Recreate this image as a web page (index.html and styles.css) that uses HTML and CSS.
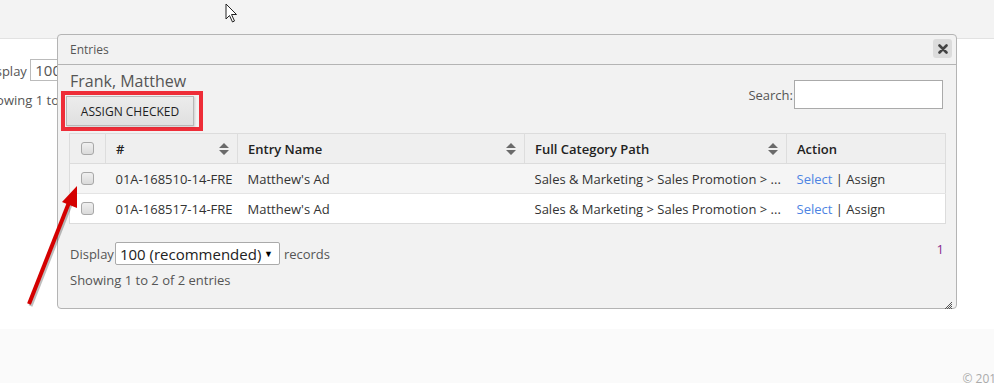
FILE: index.html
```html
<!DOCTYPE html>
<html>

<head>
    <title>Entries</title>
    <link rel="stylesheet" href="styles.css">
</head>

<body>

    <div class="topbar"></div>
    <div class="page">
        <div class="page-length">
            Display <span class="page-select">100</span> records
        </div>
        <div class="page-info">Showing 1 to 2 of 2 entries</div>
    </div>
    <div class="page-footer">&copy; 2014</div>

    <div class="dialog">
        <div class="dialog-title">
            <span>Entries</span>
            <button class="dialog-close" title="close">
                <svg width="10" height="10" viewBox="0 0 10 10">
                    <path d="M1.5 1.5 L8.5 8.5 M8.5 1.5 L1.5 8.5" stroke="#444" stroke-width="2.6" stroke-linecap="round"/>
                </svg>
            </button>
        </div>
        <div class="dialog-content">
            <div class="dialog-head">
                <div>
                    <div class="person">Frank, Matthew</div>
                    <span class="highlight"><button class="btn">ASSIGN CHECKED</button></span>
                </div>
                <label class="search">Search:<input type="text"></label>
            </div>

            <table class="entries">
                <colgroup>
                    <col class="w-check">
                    <col class="w-id">
                    <col class="w-name">
                    <col class="w-path">
                    <col class="w-action">
                </colgroup>
                <thead>
                    <tr>
                        <th class="col-check"><span class="check"></span></th>
                        <th class="sortable">#<svg class="sort" width="10" height="12" viewBox="0 0 10 12"><path d="M0 5 L5 0 L10 5 Z M0 7 L10 7 L5 12 Z"/></svg></th>
                        <th class="sortable">Entry Name<svg class="sort" width="10" height="12" viewBox="0 0 10 12"><path d="M0 5 L5 0 L10 5 Z M0 7 L10 7 L5 12 Z"/></svg></th>
                        <th class="sortable">Full Category Path<svg class="sort" width="10" height="12" viewBox="0 0 10 12"><path d="M0 5 L5 0 L10 5 Z M0 7 L10 7 L5 12 Z"/></svg></th>
                        <th>Action</th>
                    </tr>
                </thead>
                <tbody>
                    <tr>
                        <td class="col-check"><span class="check"></span></td>
                        <td>01A-168510-14-FRE</td>
                        <td>Matthew's Ad</td>
                        <td>Sales &amp; Marketing &gt; Sales Promotion &gt; ...</td>
                        <td><a href="#">Select</a> | Assign</td>
                    </tr>
                    <tr>
                        <td class="col-check"><span class="check"></span></td>
                        <td>01A-168517-14-FRE</td>
                        <td>Matthew's Ad</td>
                        <td>Sales &amp; Marketing &gt; Sales Promotion &gt; ...</td>
                        <td><a href="#">Select</a> | Assign</td>
                    </tr>
                </tbody>
            </table>

            <div class="table-foot">
                <div>
                    <div class="length">
                        Display
                        <span class="select-wrap">
                            <select>
                                <option>100 (recommended)</option>
                                <option>50</option>
                                <option>25</option>
                            </select>
                        </span>
                        records
                    </div>
                    <div class="info">Showing 1 to 2 of 2 entries</div>
                </div>
                <div class="paging">1</div>
            </div>
        </div>
        <div class="resize-grip">
            <svg width="9" height="9" viewBox="0 0 9 9">
                <path d="M8 1 L1 8 M8 3 L3 8 M8 5 L5 8 M8 7 L7 8" stroke="#555" stroke-width="1"/>
            </svg>
        </div>
    </div>

    <!-- annotation arrow -->
    <svg class="arrow" width="100" height="140" viewBox="0 0 100 140">
        <g transform="translate(1.5,2)" opacity="0.25">
            <line x1="29" y1="134" x2="70" y2="30" stroke="#000" stroke-width="4"/>
        </g>
        <line x1="29" y1="134" x2="70" y2="30" stroke="#d40000" stroke-width="4"/>
        <polygon points="77,16 77,38 62,32" fill="#d40000"/>
    </svg>

    <!-- mouse pointer -->
    <svg class="cursor" width="14" height="21" viewBox="0 0 14 21">
        <path d="M1 1 L1 16 L4.5 12.5 L7.5 19 L9.5 18 L6.5 11.5 L11.5 11.5 Z" fill="#fff" stroke="#222" stroke-width="1" stroke-linejoin="round"/>
    </svg>

</body>
</html>
```

FILE: styles.css
```css
body {
    margin: 0;
    font-family: "Open Sans", "Liberation Sans", sans-serif;
    font-size: 13px;
    color: #444;
    background: #fafafa;
    height: 383px;
    overflow: hidden;
}
.topbar {
    height: 38px;
    background: #f3f3f3;
    border-bottom: 1px solid #e2e2e2;
}
.page {
    background: #fff;
    height: 270px;
    padding-top: 20px;
    margin-left: -17px;
    color: #555;
}
.page-length {
    height: 22px;
    line-height: 22px;
}
.page-select {
    display: inline-block;
    border: 1px solid #bbb;
    padding: 0 4px;
    height: 20px;
    line-height: 20px;
    font-size: 15px;
    width: 150px;
}
.page-info {
    margin-top: 10px;
    margin-left: -2px;
}
.page-footer {
    text-align: right;
    padding-top: 41px;
    margin-right: -9px;
    font-size: 12px;
    color: #aaa;
}

/* dialog */
.dialog {
    position: absolute;
    left: 57px;
    top: 34px;
    width: 898px;
    height: 273px;
    border: 1px solid #b4b4b4;
    border-radius: 4px;
    background: #f2f2f2;
}
.dialog-title {
    height: 29px;
    line-height: 29px;
    padding-left: 12px;
    font-size: 12px;
    color: #555;
    border-bottom: 1px solid #b4b4b4;
    display: flex;
    justify-content: space-between;
}
.dialog-close {
    width: 19px;
    height: 19px;
    margin: 4px 4px 0 0;
    padding: 0;
    border: none;
    border-radius: 3px;
    background: #dcdcdc;
    display: flex;
    align-items: center;
    justify-content: center;
    cursor: pointer;
}
.dialog-content {
    padding: 7px 11px 0 11px;
}
.dialog-head {
    display: flex;
    justify-content: space-between;
    align-items: flex-start;
}
.person {
    font-size: 16px;
    line-height: 19px;
    color: #555;
    margin-left: 1px;
}
.highlight {
    display: inline-block;
    margin-left: -8px;
    padding: 1px 5px 1px 1px;
    border: 4px solid #ee2d38;
}
.btn {
    display: block;
    height: 30px;
    width: 128px;
    padding: 0;
    font-family: "Open Sans", "Liberation Sans", sans-serif;
    font-size: 12px;
    font-weight: 500;
    color: #1e1e1e;
    background: linear-gradient(#ececec, #e0e0e0);
    border: 1px solid #b8b8b8;
    box-shadow: 1px 1px 2px rgba(0, 0, 0, 0.15);
}
.search {
    margin-top: 8px;
    margin-right: 2px;
    display: flex;
    align-items: center;
    color: #555;
}
.search input {
    box-sizing: border-box;
    width: 149px;
    height: 29px;
    margin-left: 1px;
    padding: 0 3px;
    border: 1px solid #aaa;
    background: #fff;
}

/* table */
.entries {
    margin-top: 2px;
    width: 876px;
    border-collapse: collapse;
    border: 1px solid #dcdcdc;
    table-layout: fixed;
}
.w-check { width: 36px; }
.w-id { width: 132px; }
.w-name { width: 287px; }
.w-path { width: 262px; }
.w-action { width: 159px; }
.entries th,
.entries td {
    height: 29px;
    padding: 0 10px;
    text-align: left;
    white-space: nowrap;
    overflow: hidden;
    color: #333;
}
.entries th {
    font-weight: 600;
    color: #222;
    background: #efefef;
    border-right: 1px solid #dddddd;
    border-bottom: 1px solid #dcdcdc;
}
.entries td {
    border-top: 1px solid #e4e4e4;
}
.entries tbody tr:nth-child(odd) {
    background: #f5f5f5;
}
.entries tbody tr:nth-child(even) {
    background: #fff;
}
.entries .col-check {
    text-align: center;
    padding: 0;
}
.sortable {
    position: relative;
}
.sort {
    position: absolute;
    right: 8px;
    top: 9px;
    fill: #6a6a6a;
}
.check {
    display: inline-block;
    width: 11px;
    height: 11px;
    vertical-align: middle;
    border: 1px solid #a8a8a8;
    border-radius: 3px;
    background: linear-gradient(#f0f0f0, #dadada);
    margin-top: -3px;
}
.entries a {
    color: #4d84e3;
    text-decoration: none;
}

/* footer */
.table-foot {
    display: flex;
    justify-content: space-between;
    margin-top: 18px;
    color: #555;
}
.length {
    display: flex;
    align-items: center;
    gap: 4px;
    margin-left: 1px;
}
.select-wrap {
    position: relative;
    display: inline-block;
    margin-left: -3px;
}
.select-wrap select {
    appearance: none;
    width: 165px;
    height: 23px;
    padding: 0 0 0 4px;
    font-family: "Open Sans", "Liberation Sans", sans-serif;
    font-size: 15px;
    color: #222;
    background: #fff;
    border: 1px solid #aaa;
    border-radius: 2px;
}
.select-wrap::after {
    content: "\25BC";
    position: absolute;
    right: 7px;
    top: 5px;
    font-size: 9px;
    color: #000;
    pointer-events: none;
}
.info {
    margin-top: 6px;
    margin-left: 1px;
}
.paging {
    margin-top: -2px;
    margin-right: 1px;
    color: #8a2a8e;
}
.resize-grip {
    position: absolute;
    right: 3px;
    bottom: 3px;
    width: 9px;
    height: 9px;
}

/* overlays */
.arrow {
    position: absolute;
    left: 0;
    top: 170px;
}
.cursor {
    position: absolute;
    left: 225px;
    top: 3px;
}
```
